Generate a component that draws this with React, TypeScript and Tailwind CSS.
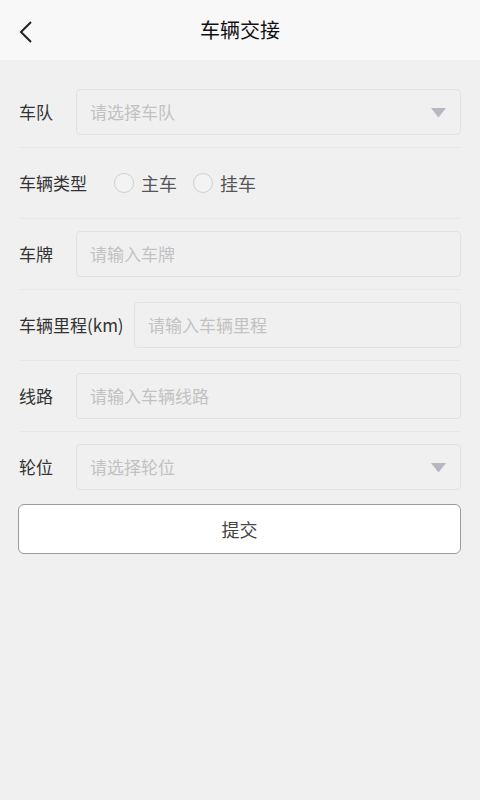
const font = { fontFamily: '"Noto Sans CJK SC", "Noto Sans", sans-serif' };

function Caret() {
  return (
    <svg width="15" height="10" viewBox="0 0 15 10" className="absolute right-[14px] top-[18px]">
      <path d="M0 0 L15 0 L7.5 9.5 Z" fill="#b7b6c2" />
    </svg>
  );
}

function Field({ label, placeholder, select, wide }: { label: string; placeholder: string; select?: boolean; wide?: boolean }) {
  return (
    <div className="flex items-center h-[71px] border-b border-[#e8e8e8]">
      <div className={`${wide ? "w-[115px]" : "w-[57px]"} shrink-0 text-[17px] text-[#333]`}>{label}</div>
      <div className="relative flex-1 h-[46px] rounded-[4px] border border-[#e2e2e2] bg-[#f0f0f0] flex items-center px-[13px]">
        <span className="text-[17px] text-[#c2c2c2]">{placeholder}</span>
        {select && <Caret />}
      </div>
    </div>
  );
}

function Radio({ label }: { label: string }) {
  return (
    <div className="flex items-center gap-[7px]">
      <div className="w-[20px] h-[20px] rounded-full border border-[#cfcfcf] bg-[#f3f3f3]" />
      <span className="text-[18px] text-[#555]">{label}</span>
    </div>
  );
}

export default function App() {
  return (
    <div style={font} className="w-[480px] h-[800px] bg-[#f0f0f0]">
      <div className="relative h-[60px] bg-[#f8f8f8] flex items-center justify-center">
        <svg width="14" height="22" viewBox="0 0 14 22" className="absolute left-[19px] top-[21px]">
          <path d="M12 1 L2 11 L12 21" fill="none" stroke="#222" strokeWidth="2" />
        </svg>
        <span className="text-[20px] text-[#111]">车辆交接</span>
      </div>
      <div className="px-[19px] pt-[17px]">
        <Field label="车队" placeholder="请选择车队" select />
        <div className="flex items-center h-[71px] border-b border-[#e8e8e8]">
          <div className="w-[95px] shrink-0 text-[17px] text-[#333]">车辆类型</div>
          <div className="flex items-center gap-[16px]">
            <Radio label="主车" />
            <Radio label="挂车" />
          </div>
        </div>
        <Field label="车牌" placeholder="请输入车牌" />
        <Field label="车辆里程(km)" placeholder="请输入车辆里程" wide />
        <Field label="线路" placeholder="请输入车辆线路" />
        <div className="flex items-center h-[70px]">
          <div className="w-[57px] shrink-0 text-[17px] text-[#333]">轮位</div>
          <div className="relative flex-1 h-[46px] rounded-[4px] border border-[#e2e2e2] bg-[#f0f0f0] flex items-center px-[13px]">
            <span className="text-[17px] text-[#c2c2c2]">请选择轮位</span>
            <Caret />
          </div>
        </div>
        <button className="mt-[2px] w-[443px] -ml-px h-[50px] rounded-[6px] border border-[#9a9a9a] bg-white text-[18px] text-[#444]">
          提交
        </button>
      </div>
    </div>
  );
}
